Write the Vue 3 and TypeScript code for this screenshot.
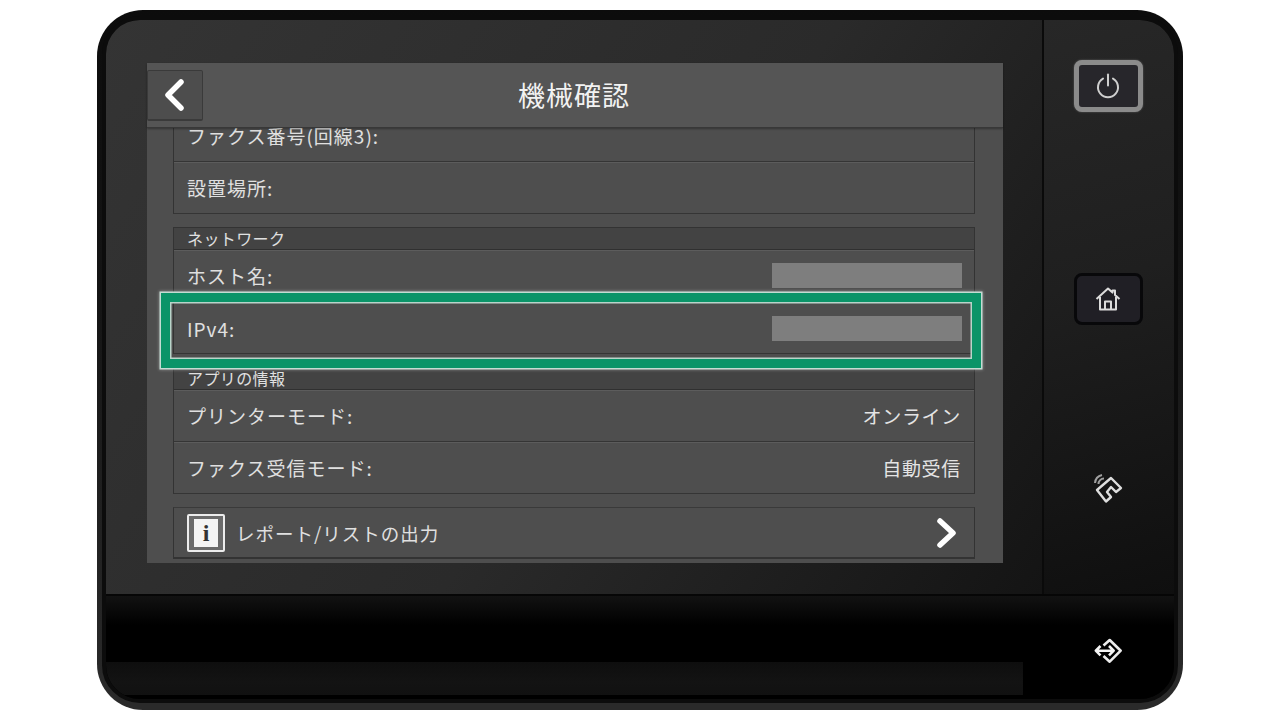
<script setup lang="ts">
interface Row { label: string; value?: string; masked?: boolean; focus?: boolean }
interface Section { title?: string; rows: Row[] }

const sections: Section[] = [
  { rows: [{ label: 'ファクス番号(回線3):' }, { label: '設置場所:' }] },
  {
    title: 'ネットワーク',
    rows: [
      { label: 'ホスト名:', masked: true },
      { label: 'IPv4:', masked: true, focus: true },
    ],
  },
  {
    title: 'アプリの情報',
    rows: [
      { label: 'プリンターモード:', value: 'オンライン' },
      { label: 'ファクス受信モード:', value: '自動受信' },
    ],
  },
]
</script>

<template>
  <div class="page">
    <div class="device">
      <div class="bezel">
        <div class="upper">
          <div class="main">
            <div class="screen">
              <header class="head">
                <button class="back" aria-label="戻る">
                  <svg width="24" height="32" viewBox="0 0 24 32">
                    <path d="M18 3 L5 16 L18 29" fill="none" stroke="#fff" stroke-width="5.5" stroke-linecap="round" stroke-linejoin="round" />
                  </svg>
                </button>
                <h1 class="title">機械確認</h1>
              </header>
              <div class="content">
                <div class="list">
                  <section v-for="(s, i) in sections" :key="i" class="section">
                    <div v-if="s.title" class="sec-title">{{ s.title }}</div>
                    <div v-for="r in s.rows" :key="r.label" class="row" :class="{ focused: r.focus }">
                      <span class="label">{{ r.label }}</span>
                      <span v-if="r.value" class="value">{{ r.value }}</span>
                      <span v-if="r.masked" class="mask"></span>
                      <div v-if="r.focus" class="focus"></div>
                    </div>
                  </section>
                  <div class="row report">
                    <span class="info"><span class="info-in">i</span></span>
                    <span class="label report-label">レポート/リストの出力</span>
                    <svg class="next" width="24" height="32" viewBox="0 0 24 32">
                      <path d="M5 4 L18 16 L5 28" fill="none" stroke="#fff" stroke-width="5.5" stroke-linecap="round" stroke-linejoin="round" />
                    </svg>
                  </div>
                </div>
              </div>
            </div>
          </div>
          <aside class="side">
            <button class="key power" aria-label="電源">
              <svg width="26" height="26" viewBox="0 0 26 26">
                <path d="M8 5.6 A10 10 0 1 0 18 5.6" fill="none" stroke="#cfcfcf" stroke-width="2" stroke-linecap="round" />
                <path d="M13 1.5 V12.5" fill="none" stroke="#cfcfcf" stroke-width="2" stroke-linecap="round" />
              </svg>
            </button>
            <button class="key home" aria-label="ホーム">
              <svg width="26" height="26" viewBox="0 0 26 26">
                <path d="M1.5 13 L13 2.5 L17.5 6.6 V4.5 H20 V9 L24.5 13 M5 11 V23.5 H21 V11 M10 23.5 V15.5 H16 V23.5" fill="none" stroke="#dcdcdc" stroke-width="2" stroke-linejoin="round" />
              </svg>
            </button>
            <svg class="nfc" width="32" height="32" viewBox="0 0 32 32">
              <path d="M5 18 L19 6 L29 16 L24 20 L19 15 L15 20 L19 25 L14 29.5 Z" fill="none" stroke="#dedede" stroke-width="2.4" stroke-linejoin="round" />
              <path d="M3 11 A9 9 0 0 1 10 3 M6.5 12 A5.5 5.5 0 0 1 12 6.5" fill="none" stroke="#a0a0a0" stroke-width="2" />
            </svg>
          </aside>
        </div>
        <div class="lower">
          <div class="strip"></div>
          <svg class="log" width="30" height="28" viewBox="0 0 30 28">
            <path d="M10.5 9.5 L16.7 4 L27.7 14.7 L16.7 25.7 L10.5 20" fill="none" stroke="#ececec" stroke-width="2.6" stroke-linejoin="round" />
            <path d="M3 14.7 H20.5 M7.5 10 L2.8 14.7 L7.5 19.4 M16 10 L20.7 14.7 L16 19.4" fill="none" stroke="#f4f4f4" stroke-width="2.6" stroke-linejoin="round" />
          </svg>
        </div>
      </div>
    </div>
  </div>
</template>

<style>
html, body { margin: 0; background: #fff; }
</style>

<style scoped>
.page {
  width: 1280px;
  height: 720px;
  box-sizing: border-box;
  padding: 10px 97px;
  background: #fff;
  font-family: "Noto Sans CJK JP", "Liberation Sans", sans-serif;
  color: #e2e2e2;
  overflow: hidden;
}
.device {
  height: 700px;
  box-sizing: border-box;
  padding: 6px 5px 7px 5px;
  border-radius: 46px;
  background: linear-gradient(180deg, #0c0c0c 0, #141414 40%, #2a2a2a 98%);
}
.bezel {
  height: 100%;
  box-sizing: border-box;
  border: 4px solid #0c0c0c;
  border-radius: 38px;
  display: flex;
  flex-direction: column;
  overflow: hidden;
  background: #000;
}
.upper {
  height: 576px;
  box-sizing: border-box;
  display: flex;
  border-bottom: 2px solid #060606;
  flex: none;
}
.main {
  width: 938px;
  box-sizing: border-box;
  padding: 43px 0 0 41px;
  border-right: 2px solid #0a0a0a;
  background: linear-gradient(125deg, #343434 0%, #2a2a2a 55%, #141414 100%);
}
.screen {
  width: 856px;
  height: 500px;
  display: flex;
  flex-direction: column;
  background: #4e4e4e;
}
.head {
  flex: none;
  height: 65px;
  box-sizing: border-box;
  display: flex;
  align-items: flex-start;
  position: relative;
  z-index: 1;
  background: #555;
  border-bottom: 1px solid #383838;
  box-shadow: 0 1px 2px rgba(0,0,0,.35);
}
.back {
  width: 56px;
  height: 51px;
  margin-top: 7px;
  padding: 0;
  box-sizing: border-box;
  display: flex;
  align-items: center;
  justify-content: center;
  background: #4d4d4d;
  border: 1px solid #3a3a3a;
  border-bottom-width: 2px;
  border-radius: 2px;
}
.title {
  flex: 1;
  margin: 11px 56px 0 0;
  padding-right: 2px;
  text-align: center;
  font-size: 27px;
  line-height: 42px;
  font-weight: 400;
  letter-spacing: 1px;
  color: #f2f2f2;
}
.content {
  flex: 1;
  min-height: 0;
  overflow: hidden;
  padding: 0 28px 0 26px;
}
.list {
  margin-top: -18px;
  display: flex;
  flex-direction: column;
  gap: 13px;
}
.section {
  display: flex;
  flex-direction: column;
  border-left: 1px solid #333;
  border-right: 1px solid #333;
}
.sec-title {
  height: 23px;
  box-sizing: border-box;
  padding-left: 13px;
  font-size: 16px;
  line-height: 21px;
  letter-spacing: .4px;
  color: #e0e0e0;
  background: #434343;
  border-top: 1px solid #333;
  border-bottom: 1px solid #303030;
}
.row {
  height: 52px;
  box-sizing: border-box;
  display: flex;
  align-items: center;
  justify-content: space-between;
  padding: 0 12px 2px 13px;
  position: relative;
  border-top: 1px solid #5c5c5c;
  border-bottom: 1px solid #353535;
}
.focused {
  padding-top: 1px;
  padding-bottom: 0;
}
.label {
  font-size: 19px;
  letter-spacing: 1px;
  color: #e0e0e0;
}
.report-label {
  font-size: 18.5px;
}
.value {
  font-size: 19px;
  letter-spacing: .7px;
  margin-right: 1px;
  color: #e4e4e4;
}
.mask {
  width: 190px;
  height: 25px;
  background: #7e7e7e;
}
.focus {
  position: absolute;
  left: -13px;
  right: -7px;
  top: -10px;
  bottom: -15px;
  border: 9px solid #0a9468;
  box-shadow:
    0 0 0 1.5px #c4dcd3,
    0 0 3px 2px rgba(255,255,255,.3),
    inset 0 0 0 1.5px #b9d4ca;
  pointer-events: none;
}
.report {
  flex: none;
  height: 52px;
  padding-bottom: 0;
  justify-content: flex-start;
  border-left: 1px solid #333;
  border-right: 1px solid #333;
  border-top: 1px solid #3a3a3a;
  border-bottom: 2px solid #333;
}
.info {
  width: 38px;
  height: 38px;
  box-sizing: border-box;
  border: 2px solid #ececec;
  border-radius: 2px;
  background: #6a6a6a;
  display: flex;
  align-items: center;
  justify-content: center;
  margin-right: 11px;
}
.info-in {
  width: 24px;
  height: 28px;
  background: #f4f4f4;
  color: #333;
  font: 700 24px/28px "Liberation Serif", serif;
  text-align: center;
}
.next {
  margin-left: auto;
  margin-right: 3px;
}
.side {
  flex: 1;
  box-sizing: border-box;
  display: flex;
  flex-direction: column;
  align-items: center;
  padding: 40px 2px 0 0;
  background: linear-gradient(165deg, #272727 0%, #1f1f1f 45%, #0f0f0f 100%);
}
.key {
  padding: 0;
  box-sizing: border-box;
  width: 69px;
  height: 52px;
  display: flex;
  align-items: center;
  justify-content: center;
  border-radius: 8px;
}
.power {
  border: 5px solid #8b8b8b;
  background: #27262b;
  box-shadow: 0 0 2px #666;
}
.home {
  margin-top: 161px;
  border: 3px solid #08080a;
  background: #201f25;
}
.nfc {
  margin-top: 147px;
}
.lower {
  flex: 1;
  position: relative;
  display: flex;
  align-items: flex-end;
  justify-content: space-between;
  background: linear-gradient(180deg, #121212 0, #000 28%, #000 100%);
}
.strip {
  width: 917px;
  height: 33px;
  margin-bottom: 4px;
  background: linear-gradient(180deg, #0e0e0e 0, #131313 60%, #111 100%);
}
.log {
  margin: 0 51px 35px 0;
}
</style>
